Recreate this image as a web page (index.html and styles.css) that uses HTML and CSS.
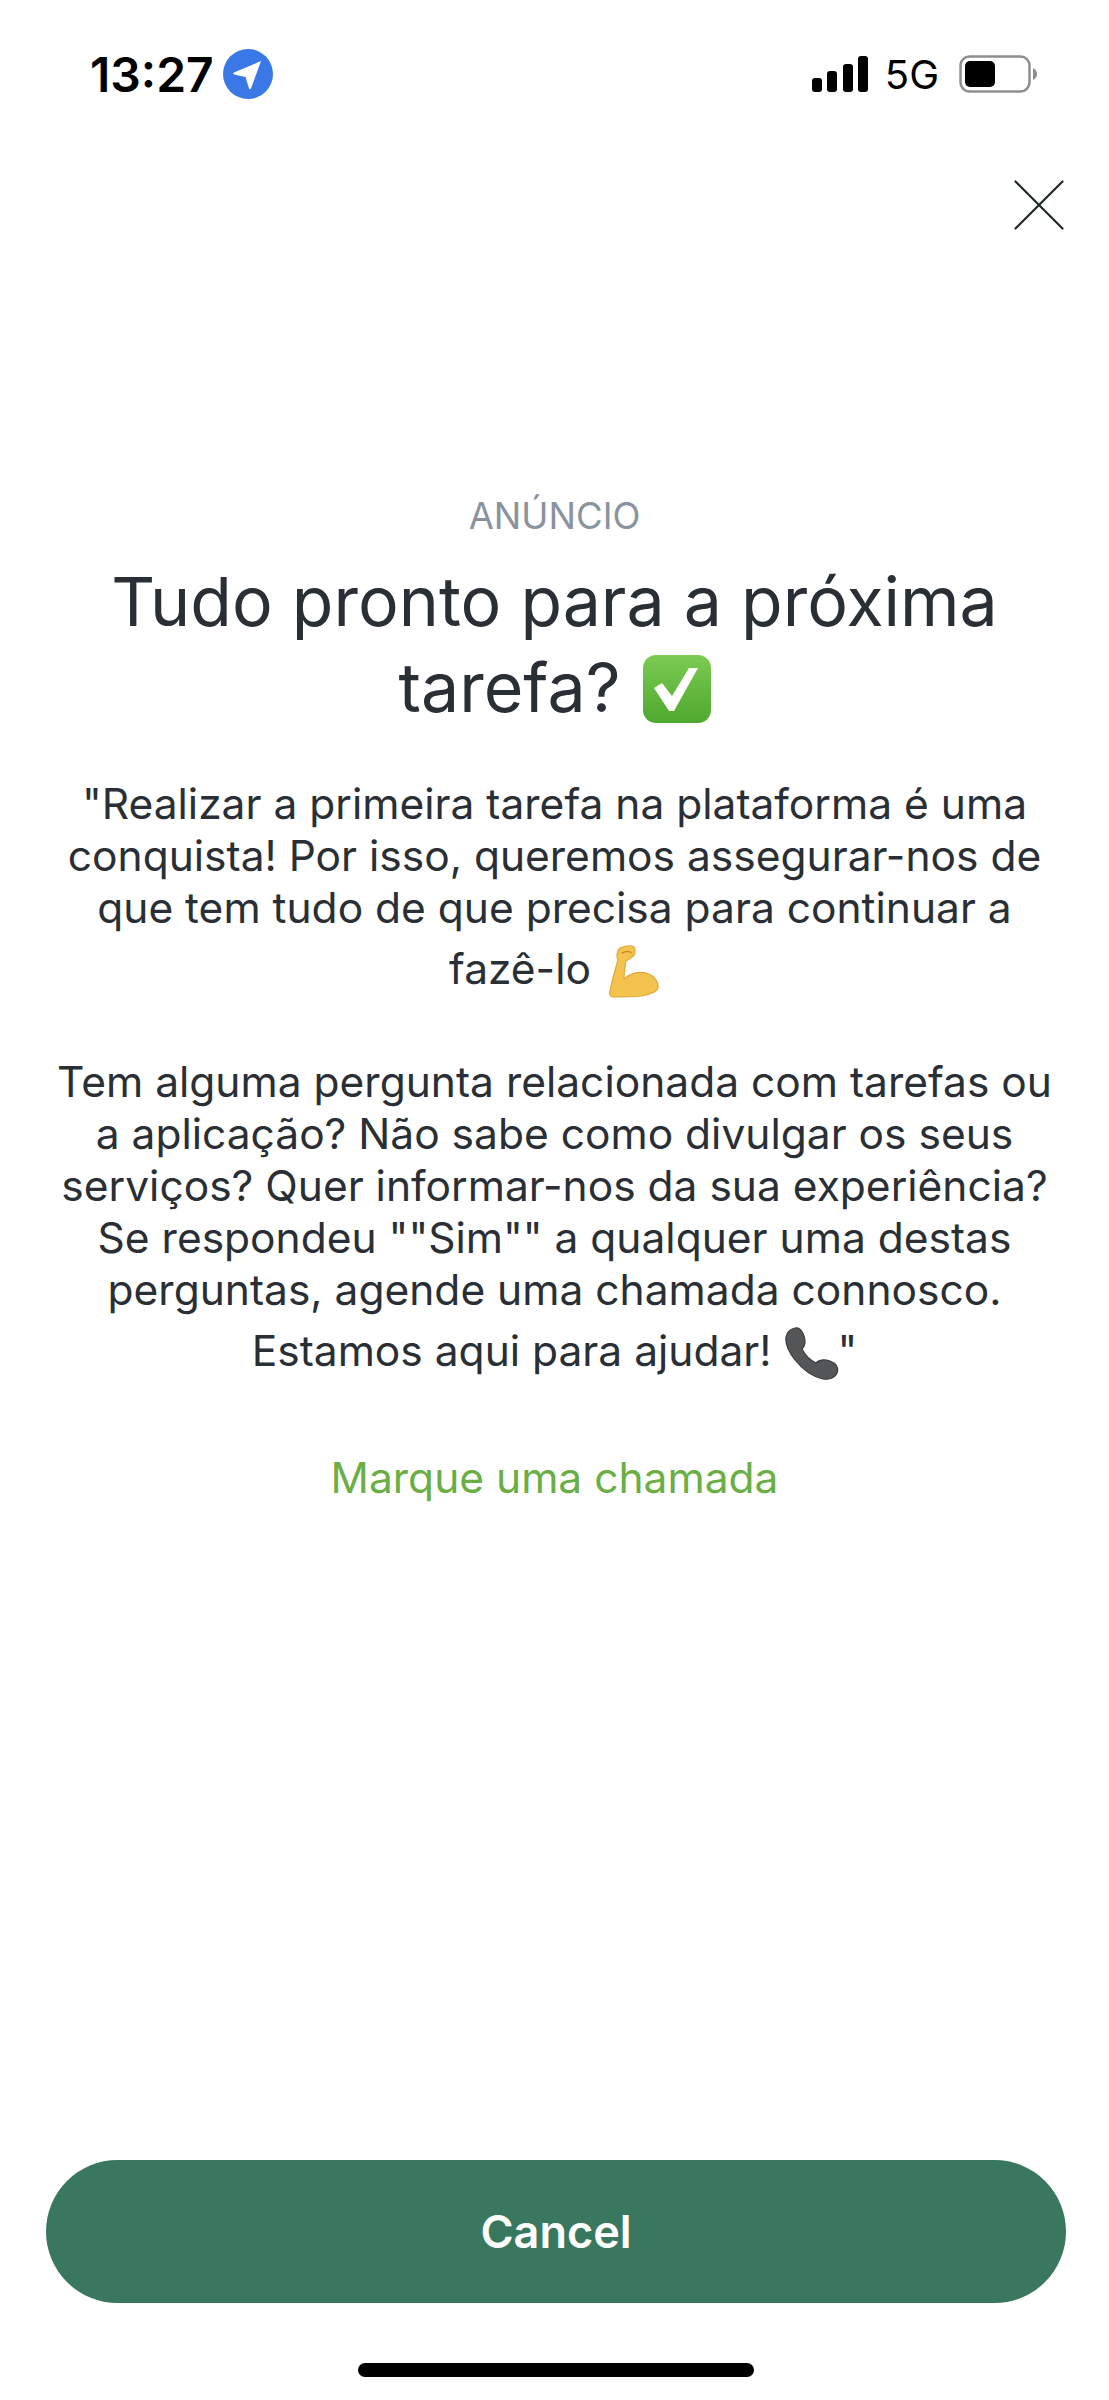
FILE: index.html
```html
<!DOCTYPE html>
<html lang="pt">

<head>
  <meta charset="UTF-8" />
  <title>Anúncio</title>
  <link rel="stylesheet" href="styles.css">
</head>

<body>
  <div class="screen">
    <div class="status-bar">
      <div class="status-left">
        <span class="clock">13:27</span>
        <svg class="location" viewBox="0 0 50 50">
          <circle cx="25" cy="25" r="25" fill="#3b78e7"></circle>
          <path d="M38 12 L11 23.500 Q9.500 24.500 11 25.500 L22.500 28 L26 39.500 Q27 41 28 39.500 Z" fill="#fff"></path>
        </svg>
      </div>
      <div class="status-right">
        <svg class="signal" viewBox="0 0 56 36">
          <rect x="0" y="22" width="10" height="14" rx="3"></rect>
          <rect x="15" y="15" width="10" height="21" rx="3"></rect>
          <rect x="31" y="8" width="10" height="28" rx="3"></rect>
          <rect x="46" y="0" width="10" height="36" rx="3"></rect>
        </svg>
        <span class="network">5G</span>
        <svg class="battery" viewBox="0 0 78 38">
          <rect x="1.500" y="1.500" width="69" height="35" rx="9" fill="none" stroke="#8e8e8e" stroke-width="2.500"></rect>
          <rect x="6" y="6" width="30" height="26" rx="5"></rect>
          <path d="M74 13 Q78 15 78 19 Q78 23 74 25 Z" fill="#8e8e8e"></path>
        </svg>
      </div>
    </div>

    <div class="close-row">
      <button class="close-button" aria-label="Fechar">
        <svg viewBox="0 0 50 50" fill="none" stroke="#1f2a24" stroke-width="2.200" stroke-linecap="round">
          <line x1="1.500" y1="1.500" x2="48.500" y2="48.500"></line>
          <line x1="48.500" y1="1.500" x2="1.500" y2="48.500"></line>
        </svg>
      </button>
    </div>

    <main class="content">
      <div class="eyebrow">ANÚNCIO</div>
      <h1 class="title">
        Tudo pronto para a próxima<br>
        tarefa?
        <svg class="emoji emoji-check" viewBox="0 0 68 68">
          <defs>
            <linearGradient id="checkGreen" x1="0" y1="0" x2="0" y2="1">
              <stop offset="0" stop-color="#7ccb52"></stop>
              <stop offset="1" stop-color="#4fa82f"></stop>
            </linearGradient>
          </defs>
          <rect width="68" height="68" rx="13" fill="url(#checkGreen)"></rect>
          <path d="M11 33 L19 28 L29 41 L46 13 L55 13 L31 56 L26 56 Z" fill="#fff"></path>
        </svg>
      </h1>

      <p class="message">
        "Realizar a primeira tarefa na plataforma é uma<br>
        conquista! Por isso, queremos assegurar-nos de<br>
        que tem tudo de que precisa para continuar a<br>
        <span class="emoji-line">fazê-lo
          <svg class="emoji emoji-arm" viewBox="0 0 52 54">
            <path d="M5 52 C2 52 1 49 2 46 C4 36 7 25 10 15 C8 11 9 6 12 3 C17 1 23 0 26 2 C28 6 27 10 24 12 L18 16 C17 22 16 28 16 34 C21 29 30 26 38 28 C46 30 51 37 50 43 C48 48 40 50 33 51 C24 52 14 52 5 52 Z" fill="#f3c24f" stroke="#e0a935" stroke-width="1.200"></path>
            <path d="M14 8 C18 6 21 6 24 8" fill="none" stroke="#c98f2a" stroke-width="1.500"></path>
          </svg>
        </span>
      </p>

      <p class="message">
        Tem alguma pergunta relacionada com tarefas ou<br>
        a aplicação? Não sabe como divulgar os seus<br>
        serviços? Quer informar-nos da sua experiência?<br>
        Se respondeu ""Sim"" a qualquer uma destas<br>
        perguntas, agende uma chamada connosco.<br>
        <span class="emoji-line">Estamos aqui para ajudar!
          <svg class="emoji emoji-phone" viewBox="0 0 54 54">
            <path d="M10 1 C14 0 17 3 19 9 C21 15 20 19 17 22 C20 28 25 33 31 36 C34 33 39 32 45 34 C51 36 54 41 52 46 C50 51 44 53 38 52 C28 50 18 43 10 33 C4 25 0 17 1 10 C2 5 5 2 10 1 Z" fill="#555658" stroke="#3c3c3e" stroke-width="1.200"></path>
          </svg>"
        </span>
      </p>

      <a class="call-link" href="#">Marque uma chamada</a>
    </main>

    <div class="footer">
      <button class="cancel-button">Cancel</button>
      <div class="home-bar"></div>
    </div>
  </div>
</body>

</html>
```

FILE: styles.css
```css
body {
  margin: 0;
  background-color: #fff;
  font-family: Inter, "Liberation Sans", sans-serif;
}

.screen {
  width: 1109px;
  height: 2400px;
  display: flex;
  flex-direction: column;
  color: #2a2f36;
}

.status-bar {
  display: flex;
  justify-content: space-between;
  align-items: center;
  height: 50px;
  padding: 49px 72px 0 90px;
  color: #000;
}

.status-left {
  display: flex;
  align-items: center;
  gap: 9px;
}

.clock {
  font-size: 48px;
  font-weight: 600;
}

.location {
  width: 50px;
  height: 50px;
}

.status-right {
  display: flex;
  align-items: center;
}

.signal {
  width: 56px;
  height: 36px;
  margin-right: 17px;
}

.network {
  font-size: 40px;
  margin-right: 20px;
}

.battery {
  width: 78px;
  height: 38px;
}

.close-row {
  display: flex;
  justify-content: flex-end;
  padding: 81px 45px 0 0;
}

.close-button {
  width: 50px;
  height: 50px;
  padding: 0;
  border: none;
  background: none;
}

.close-button svg {
  display: block;
  width: 50px;
  height: 50px;
}

.content {
  display: flex;
  flex-direction: column;
  align-items: center;
  text-align: center;
  padding-top: 264px;
}

.eyebrow {
  font-size: 36.500px;
  line-height: 44px;
  color: #8a939e;
}

.title {
  margin: 20px 0 0;
  font-size: 68px;
  font-weight: 400;
  line-height: 86px;
}

.message {
  margin: 0;
  font-size: 42.500px;
  line-height: 52px;
}

.title + .message {
  margin-top: 48px;
}

.message + .message {
  margin-top: 56px;
}

.emoji-line {
  display: block;
  padding-top: 3px;
  line-height: 63px;
}

.emoji {
  vertical-align: middle;
}

.emoji-check {
  width: 68px;
  height: 68px;
  margin-left: 3px;
  vertical-align: -11px;
}

.emoji-arm {
  width: 52px;
  height: 54px;
  margin-left: 5px;
}

.emoji-phone {
  width: 54px;
  height: 54px;
  margin: 0 -2px 0 2px;
}

.call-link {
  margin-top: 70px;
  font-size: 42.500px;
  line-height: 52px;
  color: #6aae45;
  text-decoration: none;
}

.footer {
  margin-top: auto;
  display: flex;
  flex-direction: column;
  align-items: center;
  padding: 0 43px 23px 46px;
}

.cancel-button {
  width: 100%;
  height: 143px;
  border: none;
  border-radius: 72px;
  background-color: #39785e;
  color: #fff;
  font-family: Inter, "Liberation Sans", sans-serif;
  font-size: 45px;
  font-weight: 600;
}

.home-bar {
  width: 396px;
  height: 14px;
  margin-top: 60px;
  border-radius: 7px;
  background-color: #000;
}
```
